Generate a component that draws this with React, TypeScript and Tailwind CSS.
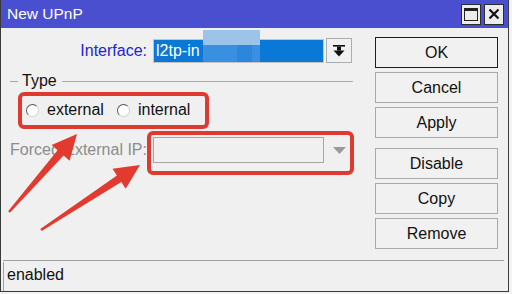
import React from "react";

const font = { fontFamily: '"Liberation Sans", Arial, sans-serif' };

function Btn({ label, primary, className = "" }: { label: string; primary?: boolean; className?: string }) {
  return (
    <div
      className={`h-[31px] w-[123px] flex items-center justify-center bg-[#f1f1f1] border text-[16px] text-[#111] ${
        primary ? "border-[#1e1e1e]" : "border-[#a9a9a9]"
      } ${className}`}
    >
      {label}
    </div>
  );
}

function Radio() {
  return (
    <div className="w-[13px] h-[13px] rounded-full bg-white border border-t-[#555] border-l-[#555] border-b-[#cfcfcf] border-r-[#cfcfcf]" />
  );
}

export default function App() {
  return (
    <div className="relative w-[512px] h-[294px] bg-[#f3f3f3] overflow-hidden" style={font}>
      <div className="w-[509px] h-[292px] flex flex-col border-l border-r border-b border-[#3a3a3a]">
        {/* Title bar */}
        <div className="h-[28px] bg-[#4a4fcf] flex items-center pl-[6px] pr-[4px]">
          <div className="text-white text-[15.5px] leading-none">New UPnP</div>
          <div className="ml-auto flex gap-[3px]">
            <div className="w-[20px] h-[21px] bg-[#ececec] border border-[#2c2c2c] flex items-center justify-center">
              <svg width="14" height="13" viewBox="0 0 14 13">
                <rect x="0.5" y="0.5" width="13" height="12" fill="none" stroke="#222" />
                <rect x="0.5" y="0.5" width="13" height="2.5" fill="#222" />
              </svg>
            </div>
            <div className="w-[20px] h-[21px] bg-[#ececec] border border-[#2c2c2c] flex items-center justify-center">
              <svg width="12" height="12" viewBox="0 0 12 12">
                <path d="M1.5 1.5 L10.5 10.5 M10.5 1.5 L1.5 10.5" stroke="#111" strokeWidth="2.2" />
              </svg>
            </div>
          </div>
        </div>

        {/* Body */}
        <div className="flex-1 flex flex-col bg-[#f0f0f0]">
          <div className="h-[232px] flex">
            {/* Left */}
            <div className="w-[374px] flex flex-col">
              <div className="mt-[10px] h-[25px] flex items-center">
                <div className="w-[146px] text-right text-[16px] text-[#2323d2]">Interface:</div>
                <div className="ml-[6px] w-[171px] h-[24px] border border-[#c4c4c4] bg-[#0a78d7] flex items-center pl-[2px] text-white text-[16px]">
                  l2tp-in
                </div>
                <div className="ml-[2px] w-[26px] h-[25px] border border-[#adadad] bg-[#f1f1f1] flex items-center justify-center">
                  <svg width="12" height="12" viewBox="0 0 12 12">
                    <rect x="0" y="0" width="12" height="1.6" fill="#111" />
                    <rect x="4" y="1.6" width="4" height="4" fill="#111" />
                    <polygon points="0.5,5.5 11.5,5.5 6,11.5" fill="#111" />
                  </svg>
                </div>
              </div>

              <div className="mt-[10px] h-[16px] w-[343px] ml-[9px] flex items-center">
                <div className="w-[8px] h-px bg-[#a8a8a8]" />
                <div className="ml-[4px] text-[16px] leading-[16px] text-[#111]">Type</div>
                <div className="ml-[5px] flex-1 h-px bg-[#a8a8a8]" />
              </div>

              <div className="mt-[12px] h-[18px] flex items-center text-[16px] text-[#111]">
                <div className="ml-[25px]"><Radio /></div>
                <div className="ml-[8px]">external</div>
                <div className="ml-[13px]"><Radio /></div>
                <div className="ml-[8px]">internal</div>
              </div>

              <div className="mt-[18px] h-[26px] flex items-center">
                <div className="w-[152px] pl-[9px] whitespace-nowrap text-[16px] text-[#8c8c8c]">Forced External IP:</div>
                <div className="relative w-[171px] h-[26px] border border-[#a6a6a6] bg-[#f0f0f0]" />
                <div className="ml-[2px] w-[26px] h-[26px] flex items-center justify-center">
                  <svg width="13" height="7" viewBox="0 0 13 7">
                    <polygon points="0,0 13,0 6.5,7" fill="#9a9a9a" />
                  </svg>
                </div>
              </div>
            </div>

            {/* Right buttons */}
            <div className="flex flex-col pt-[9px]">
              <Btn label="OK" primary />
              <Btn label="Cancel" className="mt-[4px]" />
              <Btn label="Apply" className="mt-[4px]" />
              <Btn label="Disable" className="mt-[10px]" />
              <Btn label="Copy" className="mt-[4px]" />
              <Btn label="Remove" className="mt-[4px]" />
            </div>
          </div>

          <div className="ml-[2px] mr-[4px] h-px bg-[#a0a0a0]" />
          <div className="mt-[1px] ml-[2px] mr-[4px] flex-1 border-l border-[#a0a0a0] flex items-center pl-[3px] pb-[3px] text-[16px] text-[#111]">
            enabled
          </div>
        </div>
      </div>

      {/* Redaction overlay */}
      <div className="absolute left-[203px] top-[30px] w-[57px] h-[32px] flex flex-col">
        <div className="h-[15px] bg-[#9cc4e9]" />
        <div className="flex-1 flex">
          <div className="w-[34px] bg-[#3a90e0]" />
          <div className="w-[15px] bg-[#2b86dc]" />
          <div className="flex-1 bg-[#3a8fe0]" />
        </div>
      </div>

      {/* Red annotation boxes */}
      <div className="absolute left-[18px] top-[92px] w-[191px] h-[37px] border-[4px] border-[#e03a30] rounded-[6px]" />
      <div className="absolute left-[147px] top-[131px] w-[207px] h-[44px] border-[4px] border-[#e03a30] rounded-[6px]" />

      {/* Arrows */}
      <svg className="absolute left-0 top-0" width="512" height="294" viewBox="0 0 512 294">
        <polygon
          points="9.9,212.8 63.6,155.5 69.6,160.8 77,134 51.6,145.0 57.6,150.3 8.1,211.2"
          fill="#e23a2e"
        />
        <polygon
          points="41.7,231.0 121.3,182.0 125.7,188.7 140,165 112.5,168.7 116.9,175.4 40.3,229.0"
          fill="#e23a2e"
        />
      </svg>
    </div>
  );
}
